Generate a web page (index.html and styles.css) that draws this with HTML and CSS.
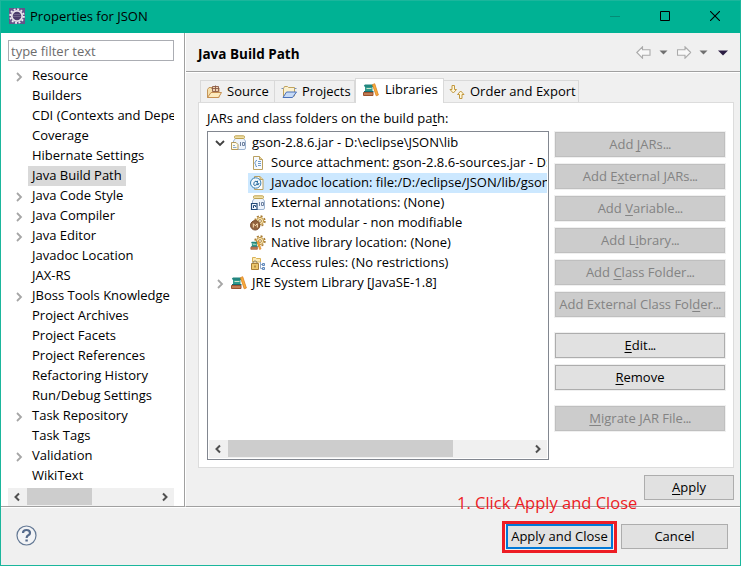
FILE: index.html
```
<!DOCTYPE html>
<html lang="en">
<head>
<meta charset="utf-8">
<title>Properties for JSON</title>
<link rel="stylesheet" href="styles.css">
</head>
<body>
<svg class="defs" width="0" height="0">
  <symbol id="right" viewBox="0 0 8 10"><path d="M2 1l4 4-4 4" fill="none" stroke="#a6a6a6" stroke-width="1.8"/></symbol>
  <symbol id="down" viewBox="0 0 10 8"><path d="M1 2l4 4 4-4" fill="none" stroke="#404040" stroke-width="1.8"/></symbol>
  <symbol id="sleft" viewBox="0 0 8 10"><path d="M6 1.500L2.500 5 6 8.500" fill="none" stroke="#505050" stroke-width="2"/></symbol>
  <symbol id="sright" viewBox="0 0 8 10"><path d="M2 1.500L5.500 5 2 8.500" fill="none" stroke="#505050" stroke-width="2"/></symbol>
  <symbol id="books" viewBox="0 0 16 16">
    <path d="M2 2.500h8v2.500H2L.8 3.700z" fill="#23867f"/>
    <path d="M2 5h7.500v4H2z" fill="#2f9b8d"/><path d="M3.500 6.500h5" stroke="#cfe6cd"/>
    <path d="M1 9h9.500v1.500H1z" fill="#176a70"/>
    <path d="M.5 10.500h9.500v3H.5z" fill="#c07c55" stroke="#9c522d"/>
    <path d="M9.500 2.700l2.200-1 3.700 11.300-2.200.8z" fill="#f7ad3e" stroke="#dd7f1d" stroke-width=".8"/>
  </symbol>
  <symbol id="jar" viewBox="0 0 16 16">
    <path d="M4.500 3.500L2.500 6v7q0 1.500 1.500 1.500h9q1.500 0 1.500-1.500V6l-2-2.500z" fill="#eef4fc" stroke="#9db4d0"/>
    <rect x="3.500" y=".8" width="10" height="2.700" rx="1" fill="#efdfa6" stroke="#bfa352"/>
    <path d="M9.500 7v4M11.500 7.500h2v3h-2z" fill="none" stroke="#6f82a0"/>
  </symbol>
  <symbol id="gear" viewBox="0 0 16 16">
    <circle cx="10" cy="6" r="4.900" fill="none" stroke="#a97c33" stroke-width="1.600" stroke-dasharray="2 1.850"/>
    <circle cx="10" cy="6" r="3.600" fill="#f8e6b4" stroke="#bd9240"/>
    <circle cx="10" cy="6" r="1.400" fill="#fff" stroke="#a57c38" stroke-width=".9"/>
  </symbol>
  <symbol id="back" viewBox="0 0 15 13"><path d="M.8 6.500l5.700-5.700v3h7.500v5.400H6.500v3z" fill="#f8f8f8" stroke="#ababab" stroke-width="1.100"/></symbol>
</svg>

<div class="window">
  <header class="titlebar">
    <svg class="app" width="16" height="16" viewBox="0 0 16 16">
      <rect width="16" height="16" fill="#65558a"/>
      <circle cx="8" cy="8" r="6.800" fill="none" stroke="#f2f0f5" stroke-width="1.800" stroke-dasharray="1.900 1.660"/>
      <circle cx="8" cy="8" r="5.200" fill="#4b3e6c" stroke="#e6e3ea" stroke-width="1.800"/>
      <path d="M4.500 6.500h7M4 8.500h8" stroke="#6e6389"/>
    </svg>
    <h1>Properties for JSON</h1>
    <div class="controls">
      <svg width="10" height="10" viewBox="0 0 10 10"><path d="M0 5.500h10" stroke="#058c76"/></svg>
      <svg width="10" height="10" viewBox="0 0 10 10"><path d="M.5.500h9v9h-9z" fill="none" stroke="#000"/></svg>
      <svg width="10" height="10" viewBox="0 0 10 10"><path d="M0 0l10 10M10 0L0 10" stroke="#000" stroke-width="1.100"/></svg>
    </div>
  </header>

  <div class="content">
    <aside class="sidebar">
      <input class="filter" placeholder="type filter text" aria-label="filter">
      <ul class="pages">
        <li><svg class="chev"><use href="#right"/></svg><span>Resource</span></li>
        <li><span>Builders</span></li>
        <li><span>CDI (Contexts and Dependency Injection)</span></li>
        <li><span>Coverage</span></li>
        <li><span>Hibernate Settings</span></li>
        <li><span class="current">Java Build Path</span></li>
        <li><svg class="chev"><use href="#right"/></svg><span>Java Code Style</span></li>
        <li><svg class="chev"><use href="#right"/></svg><span>Java Compiler</span></li>
        <li><svg class="chev"><use href="#right"/></svg><span>Java Editor</span></li>
        <li><span>Javadoc Location</span></li>
        <li><span>JAX-RS</span></li>
        <li><svg class="chev"><use href="#right"/></svg><span>JBoss Tools Knowledge</span></li>
        <li><span>Project Archives</span></li>
        <li><span>Project Facets</span></li>
        <li><span>Project References</span></li>
        <li><span>Refactoring History</span></li>
        <li><span>Run/Debug Settings</span></li>
        <li><svg class="chev"><use href="#right"/></svg><span>Task Repository</span></li>
        <li><span>Task Tags</span></li>
        <li><svg class="chev"><use href="#right"/></svg><span>Validation</span></li>
        <li><span>WikiText</span></li>
      </ul>
      <div class="scroll"><svg><use href="#sleft"/></svg><i class="thumb"></i><svg><use href="#sright"/></svg></div>
    </aside>

    <main class="main">
      <div class="heading">
        <h2>Java Build Path</h2>
        <svg class="nav" width="94" height="13" viewBox="0 0 94 13">
          <use href="#back" width="15" height="13"/>
          <path d="M23.500 4.500h8l-4 4z" fill="#707070"/>
          <use href="#back" width="15" height="13" transform="translate(55.500 0) scale(-1 1)"/>
          <path d="M63.500 4.500h8l-4 4z" fill="#707070"/>
          <path d="M82 4.500h10l-5 5z" fill="#2b1d42"/>
        </svg>
      </div>
      <nav class="tabs">
        <div class="tab source">
          <svg class="ico" viewBox="0 0 16 16"><path d="M1.500 13.500V5.500l1.500-2h3L7 5h6v8.500z" fill="#f6dfab" stroke="#c4965a"/><path d="M6.500 2.500h6v5h-6zM9.500 1.500v6M5.500 4.500h8" fill="#efd3b4" stroke="#8a5a45" stroke-width=".9"/><path d="M1.500 13.500L5 8.500h10.500l-3 5z" fill="#fdeabd" stroke="#c68f50"/></svg>
          <span>Source</span>
        </div>
        <div class="tab projects">
          <svg class="ico" viewBox="0 0 16 16"><path d="M2.500 12V4.500l1-2h3l1 1h6v8.500z" fill="#faf0cf" stroke="#c0a35c"/><path d="M.5 4.500h2M13.500 4.500h2" stroke="#7a90b8"/><path d="M2 13.500h9.500l4-5.500H5.500z" fill="#c6daf6" stroke="#4a70b8"/></svg>
          <span>Projects</span>
        </div>
        <div class="tab active">
          <svg class="ico"><use href="#books"/></svg>
          <span>Libraries</span>
        </div>
        <div class="tab order">
          <svg class="ico" viewBox="0 0 16 16"><path d="M3 1.500h2.500v4h2L4.300 9 1 5.500h2z" fill="#fff8dc" stroke="#c2983f"/><path d="M10.500 14.500H13v-4h2L11.700 7 8.500 10.500h2z" fill="#fff8dc" stroke="#c2983f"/></svg>
          <span>Order and Export</span>
        </div>
      </nav>

      <section class="panel">
        <div class="left">
          <div class="label">JARs and class folders on the build pa<u>t</u>h:</div>
          <div class="listbox">
            <ul class="entries">
              <li><svg class="open"><use href="#down"/></svg>
                <svg class="ico" viewBox="0 0 16 16"><use href="#jar"/><path d="M.5 7.500h4.500l2 2v5H.5z" fill="#fffbe9" stroke="#b39a5b"/><path d="M2 10.500h2M2 12.500h3.500" stroke="#8aa9cf"/></svg>
                <span>gson-2.8.6.jar - D:\eclipse\JSON\lib</span></li>
              <li class="child">
                <svg class="ico" viewBox="0 0 16 16"><path d="M3.500 1.500h6l3 3v10h-9z" fill="#f7faff" stroke="#b9a061"/><path d="M9.500 1.500v3h3" fill="#ead398" stroke="#b9a061"/><path d="M7 5.500H6L5.500 7l-1 1 1 1L6 11.500h1M8 6.500h3M8 8.500h3M8 10.500h3" fill="none" stroke="#5f8fc2" stroke-width=".9"/></svg>
                <span>Source attachment: gson-2.8.6-sources.jar - D:\eclipse\JSON</span></li>
              <li class="child selected">
                <svg class="ico" viewBox="0 0 16 16"><path d="M4.500 1.500h5.500l3 3v10H4.500z" fill="#fff" stroke="#b9a061"/><path d="M10 1.500v3h3" fill="#ead398" stroke="#b9a061"/><circle cx="5.700" cy="8" r="5.200" fill="#f2f9fd" stroke="#3a80b2"/><path d="M7.700 5.700L6.900 9.500Q8.500 10.800 9 8M7.200 6.700Q4.500 5.200 3.900 8.500T6.900 9.500" fill="none" stroke="#1d6499"/></svg>
                <span>Javadoc location: file:/D:/eclipse/JSON/lib/gson-2.8.6-javadoc.jar</span></li>
              <li class="child">
                <svg class="ico" viewBox="0 0 16 16"><use href="#jar"/><path d="M1.500 8.500h5.500v6H1.500z" fill="#f5f9ff" stroke="#234a78" stroke-width="1.200"/><path d="M3.500 13v-2.500h2v1.500" fill="none" stroke="#234a78"/></svg>
                <span>External annotations: (None)</span></li>
              <li class="child">
                <svg class="ico" viewBox="0 0 16 16"><use href="#gear"/><circle cx="5.200" cy="10.300" r="4.700" fill="#93633e" stroke="#7a4f2f"/><path d="M3.300 12.500V8.700l2 2 2-2v3.800" fill="none" stroke="#ffe3b7"/></svg>
                <span>Is not modular - non modifiable</span></li>
              <li class="child">
                <svg class="ico" viewBox="0 0 16 16"><use href="#gear"/><use href="#books" x="0" y="5" width="12" height="11"/></svg>
                <span>Native library location: (None)</span></li>
              <li class="child">
                <svg class="ico" viewBox="0 0 16 16"><path d="M2.500 6V2.500h3l1 1h4V7h-8z" fill="#fdeab5" stroke="#d8b257"/><path d="M1.500 8.500h7v6h-7z" fill="#ecc76c" stroke="#a98038"/><path d="M3 8V7q2-2.500 4 0v1" fill="none" stroke="#8d8668"/><path d="M5 10.500v2" stroke="#7f5a22"/><path d="M10.500 7v6.500h2M10.500 9.500h2" fill="none" stroke="#93a9c6"/><path d="M12.500 8.500h2v2h-2zM12.500 12.500h2v2h-2z" fill="#c9dcf2" stroke="#6189bb"/></svg>
                <span>Access rules: (No restrictions)</span></li>
              <li><svg class="chev"><use href="#right"/></svg>
                <svg class="ico"><use href="#books"/></svg>
                <span>JRE System Library [JavaSE-1.8]</span></li>
            </ul>
            <div class="scroll wide"><svg><use href="#sleft"/></svg><i class="thumb"></i><svg><use href="#sright"/></svg></div>
          </div>
        </div>
        <div class="actions">
          <button disabled>Add <u>J</u>ARs<b>...</b></button>
          <button disabled>Add E<u>x</u>ternal JARs<b>...</b></button>
          <button disabled>Add <u>V</u>ariable<b>...</b></button>
          <button disabled>Add L<u>i</u>brary<b>...</b></button>
          <button disabled>Add <u>C</u>lass Folder<b>...</b></button>
          <button disabled>Add External Class Fol<u>d</u>er<b>...</b></button>
          <button class="edit"><u>E</u>dit<b>...</b></button>
          <button><u>R</u>emove</button>
          <button class="migrate" disabled><u>M</u>igrate JAR File<b>...</b></button>
        </div>
      </section>
      <div class="applyrow"><button><u>A</u>pply</button></div>
    </main>
  </div>

  <footer class="footer">
    <svg class="help" width="21" height="21" viewBox="0 0 21 21"><circle cx="10.500" cy="10.500" r="9.500" fill="#f3f4f6" stroke="#647995" stroke-width="1.200"/><path d="M7 8Q7 5 10.500 5T14 8Q14 9.500 12.300 10.300T10.600 13" fill="none" stroke="#566b8c" stroke-width="2.200"/><path d="M9.400 14.500h2.400v2H9.400z" fill="#566b8c"/></svg>
    <div class="highlight"><button class="primary">Apply and Close</button></div>
    <button class="cancel">Cancel</button>
  </footer>
  <div class="note">1. Click Apply and Close</div>
</div>
</body>
</html>
```
FILE: styles.css
```
* { box-sizing: border-box; }
body { margin: 0; font: 13px/20px "Open Sans", "Noto Sans", sans-serif; color: #000; font-kerning: none; }
ul { list-style: none; margin: 0; padding: 0; }
h1, h2 { margin: 0; }
svg { display: block; flex: none; }
.defs { position: absolute; }
u { text-underline-offset: 2px; text-decoration-thickness: 1px; text-decoration-skip-ink: none; }

.window { position: relative; width: 741px; height: 566px; display: flex; flex-direction: column; background: #f0f0f0; border: 1px solid #1bb69c; border-top: 0; }

.titlebar { height: 33px; flex: none; display: flex; align-items: center; padding: 0 20px 2px 8px; background: #00b294; border-top: 1px solid #1bb69c; }
.titlebar h1 { font-size: 13px; font-weight: 400; margin-left: 5px; }
.controls { display: flex; gap: 40px; margin-left: auto; }

.content { height: 475px; flex: none; display: flex; border-bottom: 1px solid #fff; }
.sidebar { width: 184px; flex: none; padding: 7px 10px 0 7px; background: #fff; border-right: 1px solid #a0a0a0; border-bottom: 1px solid #a0a0a0; }
.filter { display: block; width: 166px; height: 21px; padding: 0 2px; border: 1px solid #abadb3; border-radius: 0; outline: 0; font: inherit; background: #fff; }
.filter::placeholder { color: #6d6d6d; opacity: 1; }
.pages { width: 166px; height: 422px; margin-top: 5px; overflow: hidden; }
.pages li { display: flex; height: 20px; align-items: center; padding-left: 20px; white-space: nowrap; }
.pages span { padding: 0 4px; height: 20px; line-height: 19px; }
.pages .current { background: #d9d9d9; }
.chev { width: 8px; height: 10px; }
.pages .chev { margin: 1px 5px 0 -13px; }

.scroll { display: flex; align-items: center; width: 166px; height: 18px; padding: 0 5px; background: #f0f0f0; }
.scroll svg { width: 8px; height: 10px; }
.thumb { width: 65px; height: 17px; margin: 0 auto 1px 6px; background: #cdcdcd; }

.main { flex: 1; display: flex; flex-direction: column; border-left: 1px solid #fff; border-bottom: 1px solid #a0a0a0; }
.heading { height: 40px; flex: none; display: flex; align-items: center; justify-content: space-between; padding: 2px 10px 0 12px; border-bottom: 1px solid #fff; box-shadow: inset 0 -1px #a0a0a0; }
.heading h2 { font-size: 13.500px; font-weight: 700; }
.nav { margin-top: -3px; }

.tabs { height: 29px; flex: none; display: flex; align-items: flex-end; padding-left: 14px; }
.tab { height: 22px; display: flex; align-items: center; gap: 5px; padding-left: 5px; border: 1px solid #d9d9d9; border-width: 1px 1px 0 0; white-space: nowrap; }
.tab span { line-height: 18px; margin-top: -2px; }
.ico { width: 16px; height: 16px; }
.source { width: 75px; border-left-width: 1px; }
.projects { width: 80px; padding-left: 6px; }
.active { position: relative; width: 89px; height: 25px; margin-bottom: -1px; padding: 0 0 2px 7px; border-left-width: 1px; background: #fff; gap: 6px; }
.order { width: 135px; }

.panel { width: 536px; height: 366px; flex: none; display: flex; margin-left: 12px; padding: 5px 6px 8px 8px; background: #fff; border: 1px solid #dcdcdc; }
.left { width: 342px; flex: none; }
.label { height: 23px; line-height: 21px; }
.listbox { height: 329px; border: 1px solid #828790; padding: 1px; display: flex; flex-direction: column; }
.entries { flex: 1; }
.entries li { display: flex; align-items: center; height: 20px; padding-left: 6px; overflow: hidden; white-space: nowrap; }
.entries span { line-height: 18px; height: 20px; margin-left: 5px; }
.entries .ico { margin-left: 6px; }
.entries .open { width: 10px; height: 8px; }
.entries .chev { margin: 1px 1px 0; }
.entries .child { margin-left: 39px; padding-left: 0; }
.entries .child .ico { margin-left: 2px; }
.selected { background: #cce8ff; }
.wide { width: 338px; flex: none; }
.wide .thumb { width: 225px; }

.actions { flex: 1; display: flex; flex-direction: column; gap: 7px; padding: 24px 0 0 6px; }
button { display: block; height: 25px; padding: 0; border: 1px solid #adadad; border-radius: 0; background: #e1e1e1; color: #000; font: inherit; line-height: 21px; text-align: center; white-space: nowrap; }
button b { font-weight: 400; letter-spacing: -.8px; }
.actions button { width: 170px; box-shadow: 0 0 0 1px #f0f0f0; }
button:disabled { background: #ccc; border-color: #bfbfbf; color: #838383; }
.actions .edit { margin-top: 9px; }
.actions .migrate { margin-top: 9px; }

.applyrow { display: flex; justify-content: flex-end; padding: 7px 6px 0 0; }
.applyrow button { width: 90px; }

.footer { flex: 1; display: flex; align-items: flex-start; padding: 13px 12px 0 15px; }
.help { margin-top: 4px; }
.highlight { width: 115px; height: 32px; margin-left: auto; border: 3px solid #ed1c24; padding: 0 1px 1px; }
.primary { width: 107px; border: 2px solid #0078d7; line-height: 19px; }
.cancel { width: 107px; margin: 3px 0 0 4px; }
.note { position: absolute; left: 456px; top: 491px; font-size: 16.500px; line-height: 24px; color: #ed1c24; white-space: nowrap; }
```
